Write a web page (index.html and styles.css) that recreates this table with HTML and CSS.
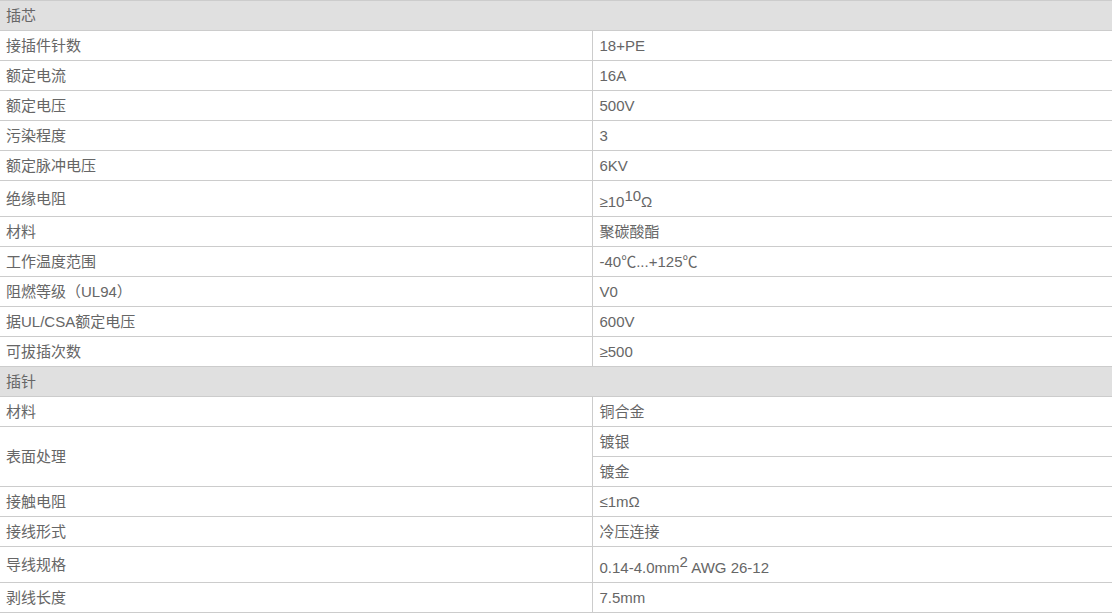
FILE: index.html
```html
<!DOCTYPE html>
<html lang="zh-CN">
<head>
<meta charset="utf-8">
<title>参数</title>
<link rel="stylesheet" href="styles.css">
</head>
<body>
<table class="spec">
  <colgroup><col class="c1"><col class="c2"></colgroup>
  <tbody>
    <tr class="group"><td colspan="2">插芯</td></tr>
    <tr><td>接插件针数</td><td>18+PE</td></tr>
    <tr><td>额定电流</td><td>16A</td></tr>
    <tr><td>额定电压</td><td>500V</td></tr>
    <tr><td>污染程度</td><td>3</td></tr>
    <tr><td>额定脉冲电压</td><td>6KV</td></tr>
    <tr class="tall"><td>绝缘电阻</td><td>≥10<sup>10</sup>Ω</td></tr>
    <tr><td>材料</td><td>聚碳酸酯</td></tr>
    <tr><td>工作温度范围</td><td>-40℃...+125℃</td></tr>
    <tr><td>阻燃等级（UL94）</td><td>V0</td></tr>
    <tr><td>据UL/CSA额定电压</td><td>600V</td></tr>
    <tr><td>可拔插次数</td><td>≥500</td></tr>
    <tr class="group"><td colspan="2">插针</td></tr>
    <tr><td>材料</td><td>铜合金</td></tr>
    <tr><td rowspan="2">表面处理</td><td>镀银</td></tr>
    <tr><td>镀金</td></tr>
    <tr><td>接触电阻</td><td>≤1mΩ</td></tr>
    <tr><td>接线形式</td><td>冷压连接</td></tr>
    <tr class="tall"><td>导线规格</td><td>0.14-4.0mm<sup>2</sup> AWG 26-12</td></tr>
    <tr><td>剥线长度</td><td>7.5mm</td></tr>
  </tbody>
</table>
</body>
</html>
```

FILE: styles.css
```css
html, body {
  margin: 0;
  padding: 0;
  background: #fff;
}
.spec {
  width: 1112px;
  border-collapse: collapse;
  table-layout: fixed;
  font-family: "Liberation Sans", "Noto Sans CJK SC", sans-serif;
  font-size: 15px;
  color: #666;
}
.spec .c1 { width: 592px; }
.spec td {
  height: 30px;
  padding: 0 6px;
  border-top: 1px solid #ccc;
  border-bottom: 1px solid #ccc;
  vertical-align: middle;
  line-height: 20px;
  box-sizing: border-box;
}
.spec td + td {
  border-left: 1px solid #ccc;
  padding-left: 7px;
}
.spec tr td:only-child {
  border-left: 1px solid #ccc;
  padding-left: 7px;
}
.spec tr.group td {
  background: #e0e0e0;
  border-left: none;
  padding-left: 6px;
}
.spec tr.tall td {
  height: 36px;
  padding-top: 6px;
}
.spec tr.tall td:first-child {
  padding-top: 0;
}
.spec sup {
  font-size: 15px;
  line-height: 0;
  vertical-align: 6px;
}
```
